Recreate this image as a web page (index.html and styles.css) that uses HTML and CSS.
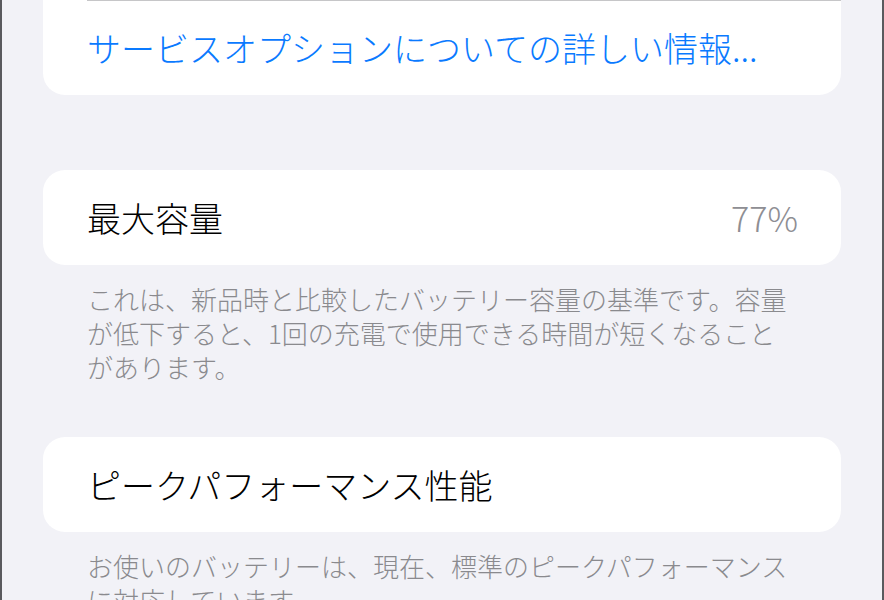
FILE: index.html
```html
<!DOCTYPE html>
<html lang="ja">
<head>
    <meta charset="UTF-8">
    <meta name="viewport" content="width=device-width, initial-scale=1.0">
    <title>バッテリーの状態</title>
    <link rel="stylesheet" href="styles.css">
</head>
<body>
    <div class="screen">
        <div class="card card-top">
            <div class="row row-hidden"></div>
            <div class="row row-link">サービスオプションについての詳しい情報...</div>
        </div>

        <div class="card">
            <div class="row">
                <span>最大容量</span>
                <span class="value">77%</span>
            </div>
        </div>
        <p class="footer">これは、新品時と比較したバッテリー容量の基準です。容量が低下すると、1回の充電で使用できる時間が短くなることがあります。</p>

        <div class="card">
            <div class="row">
                <span>ピークパフォーマンス性能</span>
            </div>
        </div>
        <p class="footer">お使いのバッテリーは、現在、標準のピークパフォーマンスに対応しています。</p>
    </div>
</body>
</html>
```

FILE: styles.css
```css
html, body {
    margin: 0;
    height: 100%;
    overflow: hidden;
}
body {
    background-color: #f2f2f7;
    font-family: "Noto Sans CJK JP", "Noto Sans", sans-serif;
    font-weight: 300;
}
.screen {
    height: 100%;
    display: flex;
    flex-direction: column;
    border-left: 2px solid #5a5a5e;
    border-right: 2px solid #5a5a5e;
    padding: 0 41px;
    box-sizing: border-box;
}
.card {
    flex-shrink: 0;
    background-color: #fff;
    border-radius: 22px;
    overflow: hidden;
}
.card-top {
    margin-top: -94px;
    margin-bottom: 75px;
    border-top-left-radius: 0;
    border-top-right-radius: 0;
}
.row {
    height: 95px;
    padding: 0 43px 0 44px;
    display: flex;
    align-items: center;
    justify-content: space-between;
    font-size: 34px;
    color: #000;
    line-height: 1;
    box-sizing: border-box;
}
.row-hidden {
    border-bottom: 1px solid #c6c6c8;
    margin-left: 44px;
    padding-left: 0;
}
.row-link {
    height: 94px;
    color: #0a7aff;
}
.value {
    color: #8e8e93;
}
.footer {
    flex-shrink: 0;
    margin: 0 0 53px;
    padding: 17px 43px 0 44px;
    font-size: 26px;
    line-height: 34px;
    color: #8a8a8e;
}
```
